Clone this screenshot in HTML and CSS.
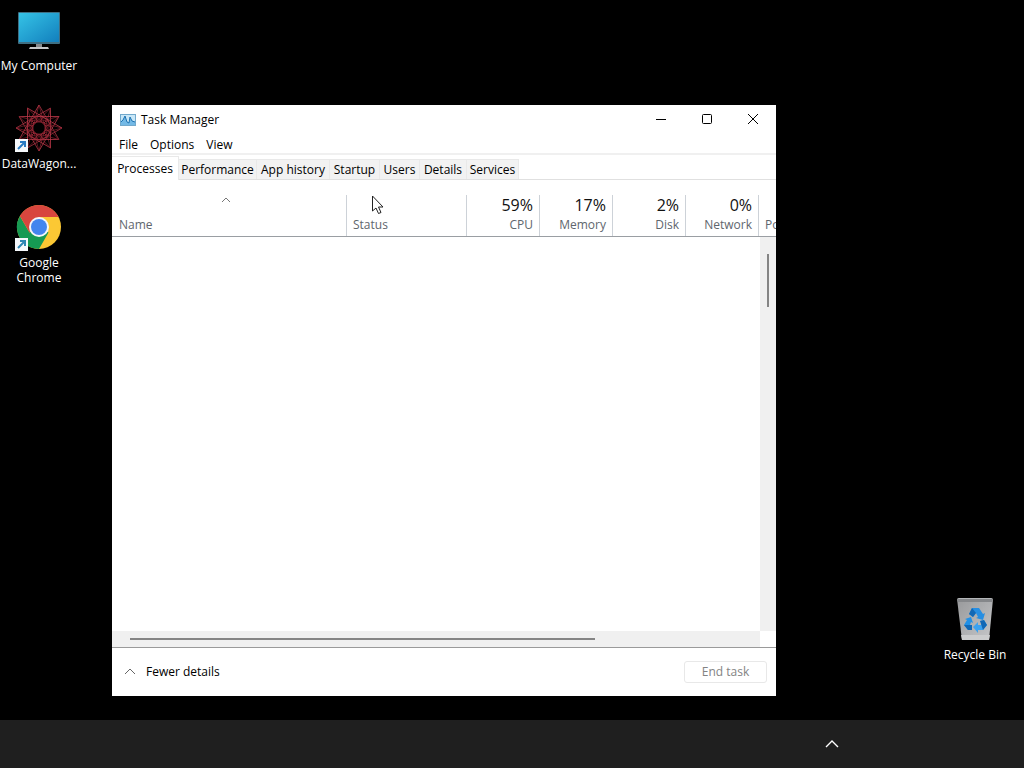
FILE: index.html
```
<!DOCTYPE html>
<html lang="en">
<head>
    <meta charset="UTF-8">
    <meta name="viewport" content="width=device-width, initial-scale=1.0">
    <title>Task Manager</title>
    <link rel="stylesheet" href="styles.css">
</head>
<body>
    <main class="desktop">
        <!-- Desktop shortcuts -->
        <a href="#" class="shortcut my-computer">
            <svg width="48" height="48" viewBox="0 0 48 48">
                <defs>
                    <linearGradient id="screen" x1="0" y1="0" x2="1" y2="1">
                        <stop offset="0" stop-color="#35c3e6"/>
                        <stop offset="1" stop-color="#127fbd"/>
                    </linearGradient>
                </defs>
                <rect x="3" y="6" width="42" height="32" rx="1" fill="#3f6f83"/>
                <rect x="4" y="7" width="40" height="29" fill="url(#screen)"/>
                <path d="M21 38h6v4h-6z" fill="#85898c"/>
                <path d="M15 41h18l1 2H14z" fill="#c4c6c8"/>
            </svg>
            <span>My Computer</span>
        </a>

        <a href="#" class="shortcut datawagon">
            <svg width="48" height="48" viewBox="0 0 48 48">
                <defs>
                    <g id="ray">
                        <path d="M24 1L43.900 35.500"/>
                        <path d="M24 1L35.500 43.900" stroke="#7d1f2c"/>
                        <circle cx="24" cy="15" r="2.500" stroke="#a52a3a"/>
                    </g>
                </defs>
                <g fill="none" stroke="#c23a4b" stroke-width="0.7">
                    <use href="#ray"/>
                    <use href="#ray" transform="rotate(30 24 24)"/>
                    <use href="#ray" transform="rotate(60 24 24)"/>
                    <use href="#ray" transform="rotate(90 24 24)"/>
                    <use href="#ray" transform="rotate(120 24 24)"/>
                    <use href="#ray" transform="rotate(150 24 24)"/>
                    <use href="#ray" transform="rotate(180 24 24)"/>
                    <use href="#ray" transform="rotate(210 24 24)"/>
                    <use href="#ray" transform="rotate(240 24 24)"/>
                    <use href="#ray" transform="rotate(270 24 24)"/>
                    <use href="#ray" transform="rotate(300 24 24)"/>
                    <use href="#ray" transform="rotate(330 24 24)"/>
                </g>
                <rect y="35" width="13" height="13" fill="#f5f8fb"/>
                <path d="M3 45l6-6M5 38h5v5" fill="none" stroke="#2a7cc4" stroke-width="2"/>
            </svg>
            <span>DataWagon...</span>
        </a>

        <a href="#" class="shortcut chrome">
            <svg width="48" height="48" viewBox="0 0 48 48">
                <circle cx="24" cy="24" r="22" fill="#fbc834"/>
                <path d="M4.900 13A22 22 0 0 1 43 13H24L24 24Z" fill="#d8463e"/>
                <path d="M24 13H43A22 22 0 0 1 43.700 14H24Z" fill="#d8463e"/>
                <path d="M4.900 13A22 22 0 0 0 24 46L33.500 29.500L24 24L14.500 29.500Z" fill="#169a53"/>
                <path d="M4.900 13L14.500 29.500L24 24V13L10 8Z" fill="#d8463e"/>
                <circle cx="24" cy="24" r="10" fill="#f4f6f8"/>
                <circle cx="24" cy="24" r="8" fill="#4385ee"/>
                <rect y="35" width="13" height="13" fill="#f5f8fb"/>
                <path d="M3 45l6-6M5 38h5v5" fill="none" stroke="#2f87b4" stroke-width="2"/>
            </svg>
            <span>Google Chrome</span>
        </a>

        <a href="#" class="shortcut recycle-bin">
            <svg width="48" height="48" viewBox="0 0 48 48">
                <defs>
                    <linearGradient id="bin" x1="0" y1="0" x2="1" y2="1">
                        <stop offset="0" stop-color="#98999b"/>
                        <stop offset="1" stop-color="#c6c7c9"/>
                    </linearGradient>
                </defs>
                <path d="M6 4H42L38 45H11Z" fill="url(#bin)"/>
                <path d="M6 4L8 3H40L42 4L41 7H7Z" fill="#85878a"/>
                <path d="M6 4L8 3H40L42 4Z" fill="#b4b6b8"/>
                <path d="M10 40H39L38 45H11Z" fill="#cbcccd"/>
                <path d="M18 19L21 13H28L32 19L34 18L32 25L25 23L27 22L25 18L22 22Z" fill="#268ee2"/>
                <path d="M33 25L36 30L32 35H27V38L22 32L27 27V30H30L31 28L29 26Z" fill="#3ba2f0"/>
                <path d="M14 24L20 22L22 28L20 27L19 30H21V35H17L13 30L16 25Z" fill="#2291e7"/>
                <path d="M18 19L21 13L25 18L22 22ZM32 35L36 30L33 25L29 26ZM13 30L17 35H21V30Z" fill="#1268b5"/>
            </svg>
            <span>Recycle Bin</span>
        </a>

        <!-- Task Manager window -->
        <section class="window">
            <header class="title-bar">
                <svg width="16" height="16" viewBox="0 0 16 16">
                    <rect x="0.500" y="2.500" width="15" height="11" fill="#c9e7f7" stroke="#72a9cc"/>
                    <path d="M1 12V9L3 8L5 4L7 10L9 11L10 5L12 9L15 10V13H1Z" fill="#73b9e6"/>
                    <path d="M1 10L3 8L5 4L7 10L9 11L10 5L12 9L15 10" fill="none" stroke="#1d72b2"/>
                </svg>
                <h1>Task Manager</h1>
                <div class="window-buttons">
                    <button aria-label="Minimize">
                        <svg width="12" height="12" viewBox="0 0 12 12"><path d="M1 5.500H11"/></svg>
                    </button>
                    <button aria-label="Maximize">
                        <svg width="12" height="12" viewBox="0 0 12 12"><rect x="1.500" y="0.500" width="9" height="9" rx="1"/></svg>
                    </button>
                    <button aria-label="Close">
                        <svg width="12" height="12" viewBox="0 0 12 12"><path d="M1 0L11 10M11 0L1 10"/></svg>
                    </button>
                </div>
            </header>

            <nav class="menu-bar">
                <button>File</button>
                <button>Options</button>
                <button>View</button>
            </nav>

            <div class="tabs" role="tablist">
                <button class="tab active" role="tab" aria-selected="true">Processes</button>
                <button class="tab" role="tab">Performance</button>
                <button class="tab" role="tab">App history</button>
                <button class="tab" role="tab">Startup</button>
                <button class="tab" role="tab">Users</button>
                <button class="tab" role="tab">Details</button>
                <button class="tab" role="tab">Services</button>
            </div>

            <div class="process-header">
                <table class="processes">
                    <thead>
                        <tr>
                            <th class="name">
                                <svg class="sort" width="10" height="6" viewBox="0 0 10 6"><path d="M1 5L5 1L9 5"/></svg>
                                <span>Name</span>
                            </th>
                            <th class="status"><span>Status</span></th>
                            <th class="usage"><strong>59%</strong><span>CPU</span></th>
                            <th class="usage"><strong>17%</strong><span>Memory</span></th>
                            <th class="usage"><strong>2%</strong><span>Disk</span></th>
                            <th class="usage"><strong>0%</strong><span>Network</span></th>
                            <th class="power"><span>Power</span></th>
                        </tr>
                    </thead>
                </table>
            </div>

            <div class="process-list">
                <div class="rows"></div>
                <div class="scroll-y"><div class="thumb"></div></div>
                <div class="scroll-x"><div class="thumb"></div></div>
            </div>

            <footer class="window-footer">
                <button class="fewer">
                    <svg width="12" height="8" viewBox="0 0 12 8"><path d="M1 6L6 1L11 6"/></svg>
                    Fewer details
                </button>
                <button class="end-task" disabled>End task</button>
            </footer>
        </section>

        <svg class="cursor" width="13" height="20" viewBox="0 0 13 20">
            <path d="M1.500 1V16L5 13L7.500 18.500L10 17.500L7.500 12H12Z" fill="#fff" stroke="#222"/>
        </svg>
    </main>

    <footer class="taskbar">
        <button aria-label="Show hidden icons">
            <svg width="14" height="8" viewBox="0 0 14 8"><path d="M1 7L7 1L13 7"/></svg>
        </button>
    </footer>
</body>
</html>
```
FILE: styles.css
```
* {
    box-sizing: border-box;
}

body {
    margin: 0;
    height: 100vh;
    display: flex;
    flex-direction: column;
    background: #000;
    color: #000;
    font-family: "Open Sans", "Noto Sans", sans-serif;
    font-size: 12px;
    line-height: 16px;
    overflow: hidden;
}

button {
    border: none;
    background: none;
    padding: 0;
    font: inherit;
    color: inherit;
}

svg {
    display: block;
    flex: none;
}

.desktop {
    position: relative;
    flex: 1;
}

/* Shortcuts */
.shortcut {
    position: absolute;
    width: 78px;
    display: flex;
    flex-direction: column;
    align-items: center;
    gap: 4px;
    color: #fff;
    line-height: 15px;
    text-align: center;
    text-decoration: none;
}

.my-computer {
    left: 0;
    top: 6px;
}

.datawagon {
    left: 0;
    top: 104px;
}

.chrome {
    left: 0;
    top: 203px;
}

.recycle-bin {
    right: 10px;
    top: 595px;
}

/* Window */
.window {
    position: absolute;
    left: 112px;
    top: 105px;
    right: 248px;
    bottom: 24px;
    display: flex;
    flex-direction: column;
    background: #fff;
    overflow: hidden;
}

.title-bar {
    display: flex;
    align-items: center;
    height: 29px;
    padding-left: 8px;
}

.title-bar h1 {
    flex: 1;
    margin: 0 0 0 5px;
    font-size: 12px;
    font-weight: normal;
}

.window-buttons {
    display: flex;
    height: 100%;
}

.window-buttons button {
    width: 46px;
    display: flex;
    align-items: center;
    justify-content: center;
}

.window-buttons svg {
    fill: none;
    stroke: #000;
}

.menu-bar {
    display: flex;
    gap: 12px;
    height: 21px;
    padding: 2px 7px 0;
    border-bottom: 2px solid #f0f0f0;
}

.tabs {
    display: grid;
    grid-template-columns: 67px 78px 73px 50px 40px 47px 52px;
    align-items: end;
    height: 25px;
    border-bottom: 1px solid #e0e0e0;
}

.tab {
    height: 20px;
    background: #f2f2f2;
    border: 1px solid #e9e9e9;
    border-left: none;
    border-bottom: none;
    white-space: nowrap;
}

.tab.active {
    height: 24px;
    margin-bottom: -1px;
    background: #fff;
}

/* Processes */
.process-header {
    padding-top: 15px;
    border-bottom: 1px solid #9a9ea3;
    overflow: hidden;
}

.processes {
    width: 720px;
    table-layout: fixed;
    border-collapse: separate;
    border-spacing: 0;
}

.processes th {
    height: 41px;
    width: 73px;
    padding: 0 6px 3px;
    border-right: 1px solid #cdd2d8;
    color: #60666d;
    font-weight: normal;
    text-align: left;
    vertical-align: bottom;
}

.processes .name {
    width: 235px;
    padding-left: 7px;
    padding-right: 14px;
}

.processes .status {
    width: 120px;
}

.processes .usage {
    text-align: right;
}

.processes span {
    display: block;
    white-space: nowrap;
}

.processes strong {
    display: block;
    margin-bottom: 2px;
    color: #111;
    font-size: 16px;
    font-weight: normal;
    line-height: 20px;
}

.sort {
    margin: 0 auto 14px;
    fill: none;
    stroke: #777;
}

.process-list {
    flex: 1;
    display: grid;
    grid-template-columns: 1fr 16px;
    grid-template-rows: 1fr 16px;
    border-bottom: 1px solid #9a9a9a;
}

.scroll-y,
.scroll-x {
    background: #f0f0f0;
}

.scroll-y {
    padding: 17px 7px 0;
}

.scroll-x {
    padding: 7px 18px 0;
}

.thumb {
    background: #858585;
}

.scroll-y .thumb {
    width: 2px;
    height: 53px;
}

.scroll-x .thumb {
    width: 76%;
    height: 2px;
}

.window-footer {
    display: flex;
    align-items: center;
    justify-content: space-between;
    height: 48px;
    padding: 0 9px 0 12px;
}

.fewer {
    display: flex;
    align-items: center;
    gap: 10px;
}

.fewer svg {
    fill: none;
    stroke: #666;
}

.end-task {
    width: 83px;
    height: 22px;
    border: 1px solid #e8e8e8;
    border-radius: 3px;
    color: #838383;
}

.cursor {
    position: absolute;
    left: 371px;
    top: 195px;
}

/* Taskbar */
.taskbar {
    display: flex;
    align-items: center;
    justify-content: flex-end;
    height: 48px;
    padding-right: 180px;
    background: #1f1f1f;
}

.taskbar button {
    width: 24px;
    height: 40px;
    display: flex;
    align-items: center;
    justify-content: center;
}

.taskbar svg {
    fill: none;
    stroke: #fff;
    stroke-width: 1.4;
}
```
